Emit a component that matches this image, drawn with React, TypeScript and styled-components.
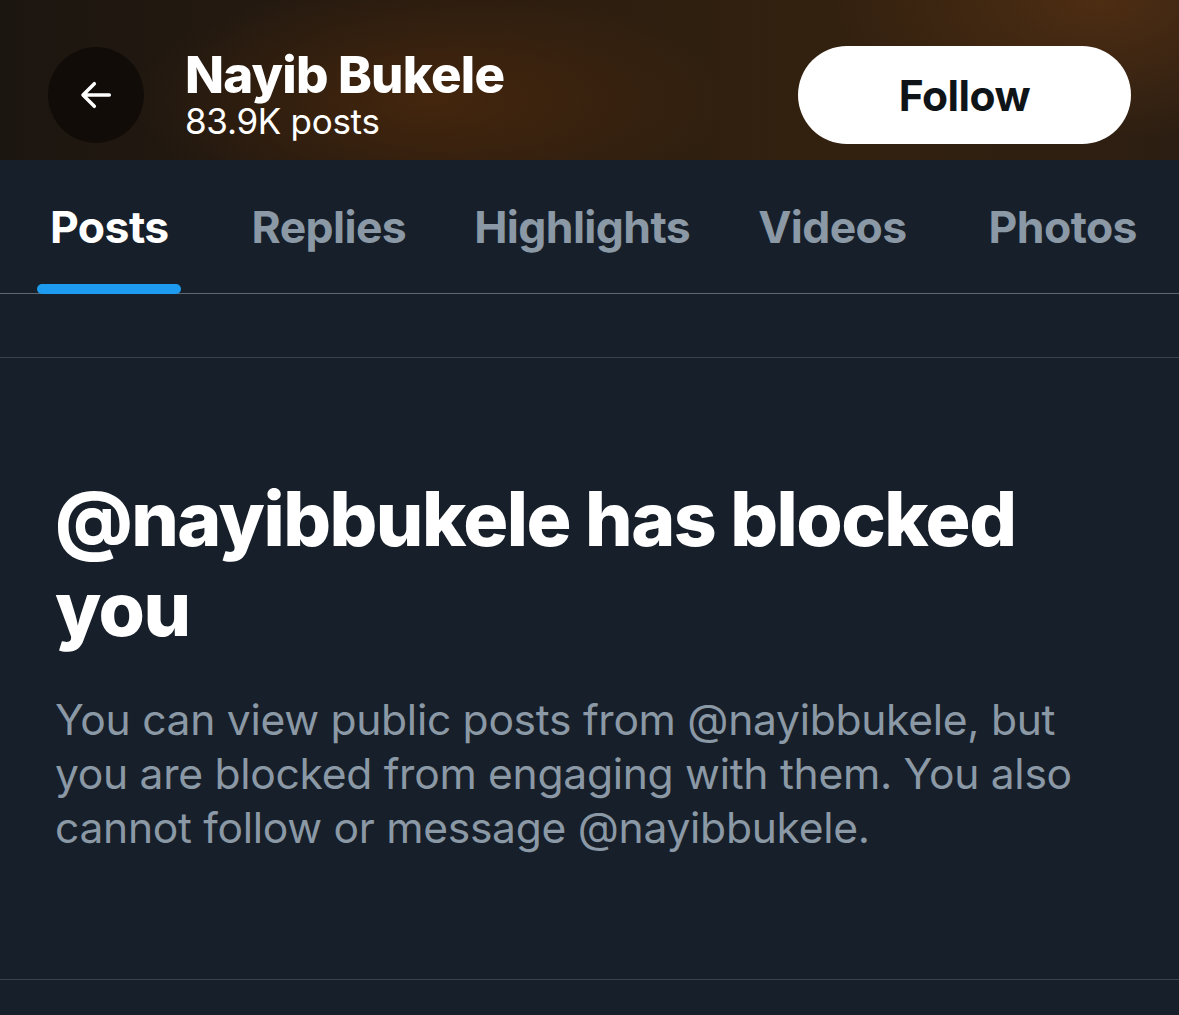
import React from "react";
import styled, { createGlobalStyle } from "styled-components";

const Global = createGlobalStyle`
  html, body { margin: 0; padding: 0; background: #17202a; }
  body { font-family: Inter, "Noto Sans", sans-serif; -webkit-font-smoothing: antialiased; }
  * { box-sizing: border-box; }
`;

const Page = styled.div`
  width: 1179px;
  height: 1015px;
  background: #17202a;
  overflow: hidden;
  display: flex;
  flex-direction: column;
`;

const Header = styled.header`
  height: 160px;
  flex: none;
  display: flex;
  align-items: center;
  padding: 30px 48px 0;
  background:
    radial-gradient(ellipse 420px 170px at 430px 100px, rgba(95, 48, 10, 0.5), transparent 70%),
    radial-gradient(ellipse 380px 200px at 1100px 0px, rgba(110, 60, 20, 0.5), transparent 70%),
    linear-gradient(90deg, #1c1610 0%, #2a1c10 40%, #33210f 70%, #2c1e12 100%);
`;

const BackButton = styled.button`
  width: 96px;
  height: 96px;
  border-radius: 50%;
  border: none;
  background: rgba(12, 8, 5, 0.72);
  display: flex;
  align-items: center;
  justify-content: center;
  padding: 0;
  flex: none;
`;

const TitleBlock = styled.div`
  margin-left: 41px;
  display: flex;
  flex-direction: column;
`;

const Name = styled.div`
  color: #fff;
  font-weight: 800;
  font-size: 51px;
  line-height: 52px;
  letter-spacing: -0.8px;
`;

const PostCount = styled.div`
  color: #fff;
  font-weight: 400;
  font-size: 35px;
  line-height: 40px;
  letter-spacing: -0.3px;
`;

const FollowButton = styled.button`
  margin-left: auto;
  width: 333px;
  height: 98px;
  border-radius: 49px;
  border: none;
  background: #fff;
  color: #0f1419;
  font-family: Inter, sans-serif;
  font-weight: 700;
  font-size: 42.5px;
  letter-spacing: -0.5px;
  padding: 0;
`;

const TabBar = styled.nav`
  height: 134px;
  flex: none;
  display: flex;
  padding: 0 0 0 50px;
  border-bottom: 1px solid #5d6873;
`;

const Tab = styled.div<{ $active?: boolean; $gap: number }>`
  position: relative;
  height: 100%;
  display: flex;
  align-items: center;
  margin-right: ${(p) => p.$gap}px;
  font-weight: 700;
  font-size: 44.5px;
  letter-spacing: -0.6px;
  color: ${(p) => (p.$active ? "#ffffff" : "#8b98a5")};

  ${(p) =>
    p.$active &&
    `
    &::after {
      content: "";
      position: absolute;
      left: 50%;
      bottom: -1px;
      width: 144px;
      height: 10px;
      margin-left: -72px;
      border-radius: 5px;
      background: #1d9bf0;
    }
  `}
`;

const EmptyRow = styled.div`
  height: 64px;
  flex: none;
  border-bottom: 1px solid #38444d;
`;

const Notice = styled.section`
  height: 622px;
  flex: none;
  padding: 116px 60px 0 55px;
  border-bottom: 1px solid #38444d;
`;

const Heading = styled.h1`
  margin: 0;
  color: #fff;
  font-weight: 800;
  font-size: 75px;
  line-height: 90px;
  letter-spacing: -1.5px;
  max-width: 1000px;
`;

const Body = styled.p`
  margin: 39px 0 0;
  color: #8b98a5;
  font-weight: 400;
  font-size: 42.6px;
  line-height: 54px;
  letter-spacing: -0.3px;
  max-width: 1070px;
`;

const tabs = [
  { label: "Posts", gap: 83 },
  { label: "Replies", gap: 68 },
  { label: "Highlights", gap: 68 },
  { label: "Videos", gap: 82 },
  { label: "Photos", gap: 0 },
];

export default function App() {
  return (
    <>
      <Global />
      <Page>
        <Header>
          <BackButton aria-label="Back">
            <svg width="40" height="40" viewBox="0 0 24 24" fill="none">
              <path
                d="M20 12H4.5M11 5.2L4.2 12l6.8 6.8"
                stroke="#fff"
                strokeWidth="2.1"
                strokeLinecap="round"
                strokeLinejoin="round"
              />
            </svg>
          </BackButton>
          <TitleBlock>
            <Name>Nayib Bukele</Name>
            <PostCount>83.9K posts</PostCount>
          </TitleBlock>
          <FollowButton>Follow</FollowButton>
        </Header>
        <TabBar>
          {tabs.map((t, i) => (
            <Tab key={t.label} $active={i === 0} $gap={t.gap}>
              {t.label}
            </Tab>
          ))}
        </TabBar>
        <EmptyRow />
        <Notice>
          <Heading>@nayibbukele has blocked you</Heading>
          <Body>
            You can view public posts from @nayibbukele, but you are blocked
            from engaging with them. You also cannot follow or message
            @nayibbukele.
          </Body>
        </Notice>
      </Page>
    </>
  );
}
